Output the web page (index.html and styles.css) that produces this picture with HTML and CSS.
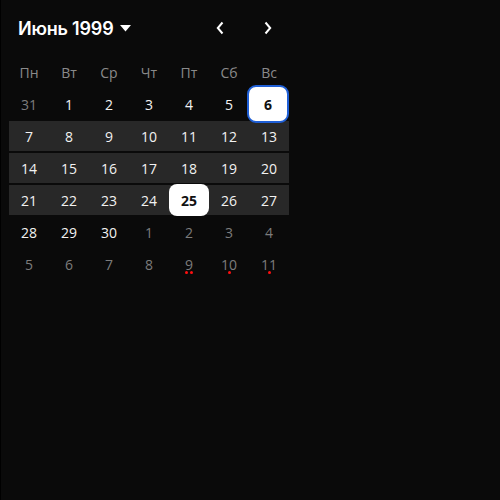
FILE: index.html
```html
<!DOCTYPE html>
<html lang="ru">
<head>
<meta charset="utf-8">
<link rel="stylesheet" href="styles.css">
</head>
<body>
<div class="cal">
  <div class="header">
    <div class="title">Июнь 1999 <svg class="caret" width="11" height="7" viewBox="0 0 11 7"><path d="M0 0 H11 L5.5 6.5 Z" fill="#fff"/></svg></div>
    <div class="nav">
      <button class="navbtn" aria-label="prev"><svg width="8" height="14" viewBox="0 0 8 14"><path d="M6.5 1.5 L1.8 7 L6.5 12.5" fill="none" stroke="#fff" stroke-width="2"/></svg></button>
      <button class="navbtn" aria-label="next"><svg width="8" height="14" viewBox="0 0 8 14"><path d="M1.5 1.5 L6.2 7 L1.5 12.5" fill="none" stroke="#fff" stroke-width="2"/></svg></button>
    </div>
  </div>
  <div class="week head">
    <div class="wd">Пн</div><div class="wd">Вт</div><div class="wd">Ср</div><div class="wd">Чт</div><div class="wd">Пт</div><div class="wd">Сб</div><div class="wd">Вс</div>
  </div>
  <div class="week">
    <div class="day muted">31</div><div class="day">1</div><div class="day">2</div><div class="day">3</div><div class="day">4</div><div class="day">5</div><div class="day selected">6</div>
  </div>
  <div class="week band">
    <div class="day">7</div><div class="day">8</div><div class="day">9</div><div class="day">10</div><div class="day">11</div><div class="day">12</div><div class="day">13</div>
  </div>
  <div class="week band">
    <div class="day">14</div><div class="day">15</div><div class="day">16</div><div class="day">17</div><div class="day">18</div><div class="day">19</div><div class="day">20</div>
  </div>
  <div class="week band">
    <div class="day">21</div><div class="day">22</div><div class="day">23</div><div class="day">24</div><div class="day today">25</div><div class="day">26</div><div class="day">27</div>
  </div>
  <div class="week">
    <div class="day">28</div><div class="day">29</div><div class="day">30</div><div class="day muted">1</div><div class="day muted">2</div><div class="day muted">3</div><div class="day muted">4</div>
  </div>
  <div class="week">
    <div class="day muted">5</div><div class="day muted">6</div><div class="day muted">7</div><div class="day muted">8</div>
    <div class="day muted">9<span class="dots"><i></i><i></i></span></div>
    <div class="day muted">10<span class="dots"><i></i></span></div>
    <div class="day muted">11<span class="dots"><i></i></span></div>
  </div>
</div>
</body>
</html>
```
FILE: styles.css
```css
html, body {
  margin: 0;
  padding: 0;
  height: 100%;
  background: #0a0a0a;
}
body {
  border-left: 1px solid #000;
  box-sizing: border-box;
  font-family: "Open Sans", "DejaVu Sans", sans-serif;
  color: #f2f2f2;
}
.cal {
  width: 280px;
  padding-left: 8px;
}
.header {
  height: 56px;
  display: flex;
  align-items: center;
  justify-content: space-between;
  padding-left: 9px;
}
.title {
  font-family: "Inter", "Open Sans", sans-serif;
  font-weight: 600;
  font-size: 18px;
  color: #fff;
  display: flex;
  align-items: center;
  gap: 4px;
  letter-spacing: -0.2px;
}
.caret {
  margin-left: 3px;
  margin-top: 1px;
}
.nav {
  display: flex;
  gap: 8px;
  padding-right: 1px;
}
.navbtn {
  width: 40px;
  height: 40px;
  border: 0;
  background: transparent;
  padding: 0;
  display: flex;
  align-items: center;
  justify-content: center;
}
.week {
  display: grid;
  grid-template-columns: repeat(7, 40px);
  height: 32px;
}
.week.band {
  padding: 1px 0;
  height: 30px;
  background: #282828;
  background-clip: content-box;
}
.wd {
  display: flex;
  align-items: center;
  justify-content: center;
  font-size: 14px;
  color: #8a8a8a;
}
.day {
  position: relative;
  display: flex;
  align-items: center;
  justify-content: center;
  font-size: 14px;
  color: #f2f2f2;
}
.day.muted {
  color: #7c7c7c;
}
.day.today {
  margin: -1px 0;
  background: #fff;
  color: #111;
  font-weight: 700;
  border-radius: 8px;
}
.day.selected {
  margin: -3px 0 -3px -2px;
  width: 42px;
  height: 38px;
  box-sizing: border-box;
  background: #fff;
  color: #111;
  font-weight: 700;
  border: 2px solid #1f5fd6;
  border-radius: 9px;
}
.dots {
  position: absolute;
  left: 0;
  right: 0;
  bottom: 6px;
  display: flex;
  justify-content: center;
  gap: 2px;
}
.dots i {
  width: 3px;
  height: 3px;
  border-radius: 50%;
  background: #ff1010;
}
```
